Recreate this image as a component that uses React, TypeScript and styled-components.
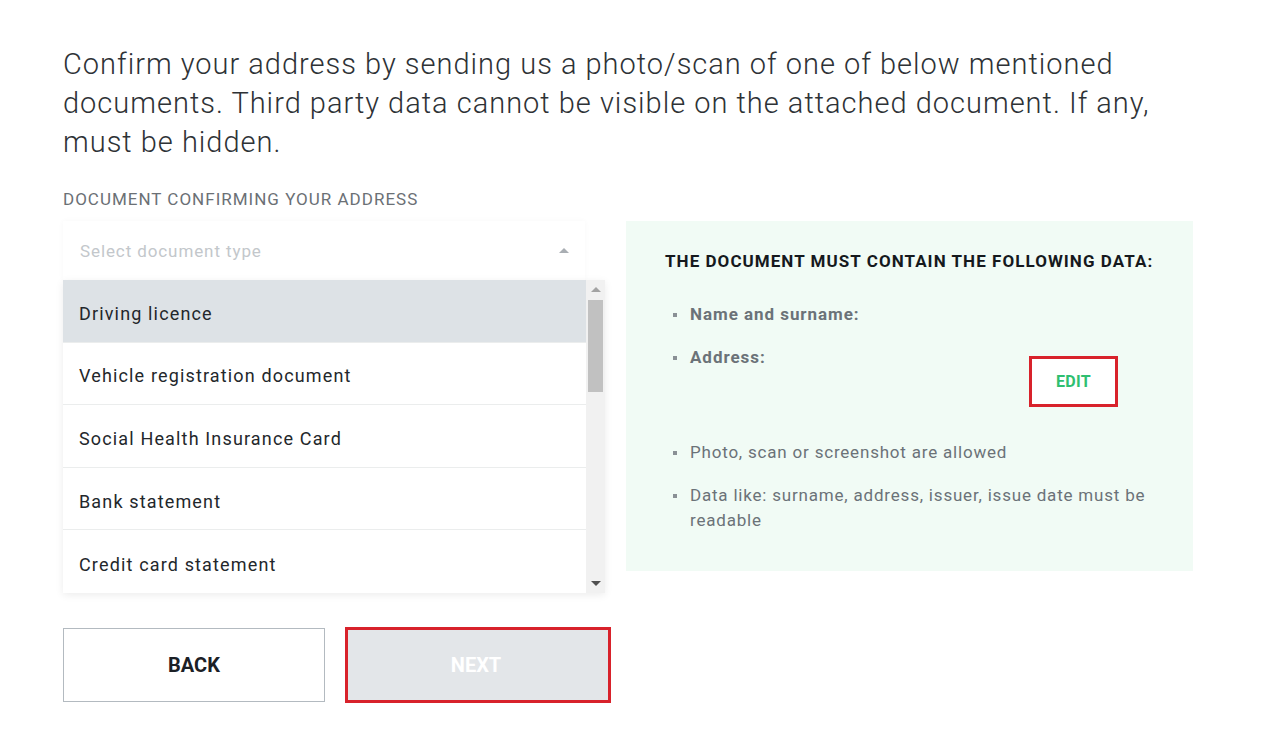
import * as React from "react";
import styled, { createGlobalStyle } from "styled-components";

const GlobalStyle = createGlobalStyle`
  html, body {
    margin: 0;
    padding: 0;
    background: #ffffff;
    font-family: Roboto, "Noto Sans", "Liberation Sans", sans-serif;
  }
  * {
    box-sizing: border-box;
  }
`;

const Page = styled.div`
  width: 1130px;
  padding: 45px 0 40px 63px;
  box-sizing: content-box;
`;

const Intro = styled.p`
  margin: 0;
  font-size: 29px;
  line-height: 39px;
  font-weight: 300;
  letter-spacing: 1px;
  color: #2e3236;
`;

const FieldLabel = styled.div`
  margin-top: 27px;
  font-size: 17px;
  line-height: 20px;
  letter-spacing: 1px;
  color: #6b7075;
  text-transform: uppercase;
`;

const Columns = styled.div`
  margin-top: 12px;
  display: grid;
  grid-template-columns: 542px 567px;
  column-gap: 21px;
  align-items: start;
`;

const LeftColumn = styled.div`
  display: flex;
  flex-direction: column;
`;

const SelectField = styled.div`
  width: 522px;
  height: 59px;
  display: flex;
  align-items: center;
  justify-content: space-between;
  padding: 0 16px 0 17px;
  background: #ffffff;
  box-shadow: 0 0 6px rgba(0, 0, 0, 0.03);
`;

const Placeholder = styled.span`
  font-size: 17px;
  letter-spacing: 0.9px;
  color: #c3c7cb;
`;

const Caret = styled.span<{ $dir: "up" | "down"; $color: string }>`
  width: 0;
  height: 0;
  border-left: 5px solid transparent;
  border-right: 5px solid transparent;
  ${(p) =>
    p.$dir === "up"
      ? `border-bottom: 5px solid ${p.$color};`
      : `border-top: 5px solid ${p.$color};`}
`;

const Dropdown = styled.div`
  display: flex;
  height: 313px;
  background: #ffffff;
  box-shadow: 0 2px 8px rgba(0, 0, 0, 0.08);
`;

const Options = styled.ul`
  flex: 1;
  margin: 0;
  padding: 0;
  list-style: none;
  display: flex;
  flex-direction: column;
`;

const Option = styled.li<{ $selected?: boolean }>`
  height: 62.6px;
  display: flex;
  align-items: center;
  padding: 5px 0 0 16px;
  font-size: 18px;
  letter-spacing: 1.15px;
  color: #23272b;
  background: ${(p) => (p.$selected ? "#dde2e6" : "#ffffff")};
  border-bottom: 1px solid #ebeded;

  &:last-child {
    border-bottom: none;
  }
`;

const Scrollbar = styled.div`
  width: 19px;
  background: #f1f1f1;
  display: flex;
  flex-direction: column;
  align-items: center;
`;

const ScrollArrow = styled.div`
  height: 19px;
  display: flex;
  align-items: center;
  justify-content: center;
`;

const ScrollTrack = styled.div`
  flex: 1;
  width: 100%;
  padding: 1px 2px;
`;

const ScrollThumb = styled.div`
  height: 92px;
  background: #c1c1c1;
`;

const Actions = styled.div`
  margin-top: 34px;
  display: flex;
  align-items: center;
  gap: 20px;
`;

const Button = styled.button<{ $variant: "back" | "next" }>`
  flex-shrink: 0;
  height: ${(p) => (p.$variant === "next" ? "76px" : "74px")};
  width: ${(p) => (p.$variant === "next" ? "266px" : "262px")};
  padding: 0;
  font-family: Roboto, "Liberation Sans", sans-serif;
  font-size: 20px;
  font-weight: 700;
  text-transform: uppercase;
  cursor: pointer;
  ${(p) =>
    p.$variant === "next"
      ? `
    background: #e3e6e9;
    color: #ffffff;
    border: 3px solid #d8222b;
    text-indent: -4px;
  `
      : `
    background: #ffffff;
    color: #1b2026;
    border: 1px solid #b3bac0;
  `}
`;

const InfoPanel = styled.div`
  background: #f1fbf5;
  padding: 30px 40px 38px 39px;
  min-height: 350px;
`;

const InfoTitle = styled.h3`
  margin: 0;
  font-size: 17px;
  line-height: 20px;
  font-weight: 700;
  letter-spacing: 1.05px;
  white-space: nowrap;
  color: #15191d;
  text-transform: uppercase;
`;

const Requirements = styled.ul`
  margin: 31px 0 0 0;
  padding: 0;
  list-style: none;
  display: flex;
  flex-direction: column;
  gap: 18px;
`;

const Requirement = styled.li<{ $bold?: boolean }>`
  position: relative;
  padding-left: 25px;
  font-size: 17px;
  line-height: 25px;
  font-weight: ${(p) => (p.$bold ? 700 : 400)};
  letter-spacing: ${(p) => (p.$bold ? "0.95px" : "0.8px")};
  color: #6b7278;

  &::before {
    content: "";
    position: absolute;
    left: 8px;
    top: 11px;
    width: 4px;
    height: 4px;
    background: #8a9095;
  }
`;

const AddressRow = styled.div`
  display: flex;
  align-items: flex-start;
  justify-content: space-between;
  padding-right: 35px;
  margin-bottom: 15px;
`;

const EditButton = styled.button`
  margin-top: 11px;
  width: 89px;
  height: 51px;
  padding: 0;
  background: #ffffff;
  border: 3px solid #d8222b;
  font-family: Roboto, "Liberation Sans", sans-serif;
  font-size: 16px;
  font-weight: 700;
  letter-spacing: 0.3px;
  color: #2fbf71;
  cursor: pointer;
`;

const documentTypes = [
  "Driving licence",
  "Vehicle registration document",
  "Social Health Insurance Card",
  "Bank statement",
  "Credit card statement",
];

export default function App() {
  return (
    <>
      <GlobalStyle />
      <Page>
        <Intro>
          Confirm your address by sending us a photo/scan of one of below
          mentioned documents. Third party data cannot be visible on the
          attached document. If any, must be hidden.
        </Intro>
        <FieldLabel>Document confirming your address</FieldLabel>
        <Columns>
          <LeftColumn>
            <SelectField>
              <Placeholder>Select document type</Placeholder>
              <Caret $dir="up" $color="#a9aeb3" />
            </SelectField>
            <Dropdown>
              <Options>
                {documentTypes.map((doc, i) => (
                  <Option key={doc} $selected={i === 0}>
                    {doc}
                  </Option>
                ))}
              </Options>
              <Scrollbar>
                <ScrollArrow>
                  <Caret $dir="up" $color="#a3a3a3" />
                </ScrollArrow>
                <ScrollTrack>
                  <ScrollThumb />
                </ScrollTrack>
                <ScrollArrow>
                  <Caret $dir="down" $color="#505050" />
                </ScrollArrow>
              </Scrollbar>
            </Dropdown>
            <Actions>
              <Button $variant="back">Back</Button>
              <Button $variant="next" disabled>
                Next
              </Button>
            </Actions>
          </LeftColumn>
          <InfoPanel>
            <InfoTitle>The document must contain the following data:</InfoTitle>
            <Requirements>
              <Requirement $bold>Name and surname:</Requirement>
              <Requirement $bold>
                <AddressRow>
                  <span>Address:</span>
                  <EditButton>EDIT</EditButton>
                </AddressRow>
              </Requirement>
              <Requirement>Photo, scan or screenshot are allowed</Requirement>
              <Requirement>
                Data like: surname, address, issuer, issue date must be
                readable
              </Requirement>
            </Requirements>
          </InfoPanel>
        </Columns>
      </Page>
    </>
  );
}
